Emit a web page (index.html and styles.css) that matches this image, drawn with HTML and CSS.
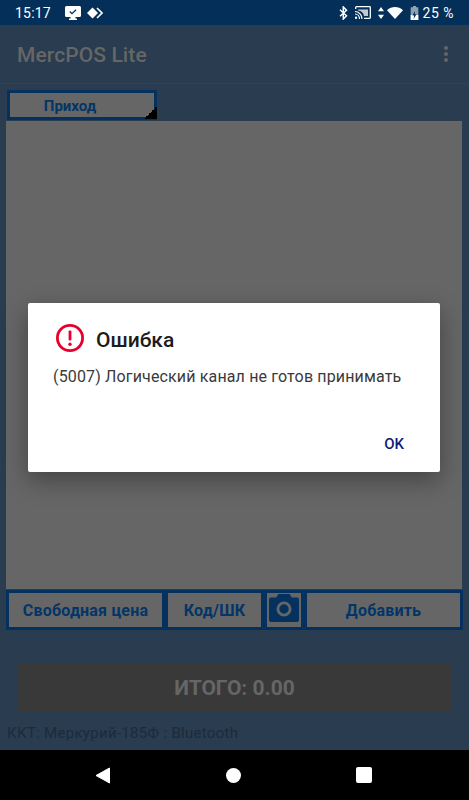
FILE: index.html
```html
<!DOCTYPE html>
<html lang="ru">
<head>
<meta charset="utf-8">
<title>MercPOS Lite</title>
<link rel="stylesheet" href="styles.css">
</head>
<body>
<div class="screen">
  <header class="statusbar">
    <div class="status-left">
      <span class="clock">15:17</span>
      <svg class="ic-monitor" width="16" height="14" viewBox="0 0 16 14"><path fill="#fff" d="M1.5 0h13A1.5 1.5 0 0 1 16 1.500v8A1.500 1.500 0 0 1 14.500 11h-4v1.500h1.500V14H4v-1.500h1.500V11h-4A1.500 1.500 0 0 1 0 9.500v-8A1.500 1.500 0 0 1 1.500 0z"/><path fill="none" stroke="#032f58" stroke-width="1.300" d="M4.800 5.500l2.200 2.200 4-4"/></svg>
      <svg class="ic-nfc" width="16" height="12" viewBox="0 0 16 12"><path fill="#fff" d="M5.500 0.500l5.500 5.500-5.500 5.500L0 6z"/><path fill="none" stroke="#fff" stroke-width="1.600" d="M10 1l5 5-5 5"/></svg>
    </div>
    <div class="status-right">
      <svg width="9" height="14" viewBox="0 0 9 14"><path fill="none" stroke="#fff" stroke-width="1.500" d="M1 3.800l6.500 6L4.300 13V1l3.200 3.200L1 10.200"/></svg>
      <svg class="ic-cast" width="16" height="13" viewBox="0 0 16 13"><path fill="none" stroke="#fff" stroke-width="1.300" d="M0.700 3V1.500a.8.8 0 0 1 .8-.8h13a.8.8 0 0 1 .8.8v10a.8.8 0 0 1-.8.8H9"/><path fill="#fff" d="M3 3.500h10v6.500H9C8.500 7 6.500 5 3 4.600z" opacity=".75"/><path fill="none" stroke="#fff" stroke-width="1.200" d="M0 5.500c3.500 0 7 3 7 7.500M0 8c2.500 0 4.500 2 4.500 5"/><circle cx="1" cy="11.800" r="1.200" fill="#fff"/></svg>
      <svg class="ic-updown" width="6" height="12" viewBox="0 0 6 12"><path fill="#fff" d="M3 0l3 4.200H0zM3 12L0 7.800h6z"/></svg>
      <svg class="ic-wifi" width="16" height="12" viewBox="0 0 16 12"><path fill="#fff" d="M0 3.200C4.500-1 11.500-1 16 3.200L8 12z"/></svg>
      <svg class="ic-batt" width="9" height="14" viewBox="0 0 9 14"><path fill="#fff" opacity=".55" d="M3 0h3v1.300h2.300V14H.7V1.300H3z"/><path fill="#fff" d="M.7 9h7.600v5H.7z"/><path fill="#032f58" d="M5 5L2.500 9.500h1.600L3.600 13 6.500 8.300H4.800z"/></svg>
      <span class="battery-text">25 %</span>
    </div>
  </header>

  <div class="toolbar">
    <span class="app-title">MercPOS Lite</span>
    <span class="overflow"><i></i><i></i><i></i></span>
  </div>

  <main class="content">
    <div class="spinner">Приход</div>
    <div class="list"></div>
    <div class="actions">
      <button class="btn btn-free">Свободная цена</button>
      <button class="btn btn-code">Код/ШК</button>
      <button class="btn btn-cam" aria-label="Камера">
        <svg width="30" height="28" viewBox="0 0 30 28"><path fill="#04315d" fill-rule="evenodd" d="M9.500 0h11l2.300 3.400H28a2 2 0 0 1 2 2V26a2 2 0 0 1-2 2H2a2 2 0 0 1-2-2V5.400a2 2 0 0 1 2-2h5.200zM15 7.500a7.500 7.500 0 1 0 0 15 7.500 7.500 0 0 0 0-15zM15 10.300a4.700 4.700 0 1 1 0 9.400 4.700 4.700 0 0 1 0-9.400z"/></svg>
      </button>
      <button class="btn btn-add">Добавить</button>
    </div>
    <div class="total">ИТОГО: 0.00</div>
    <div class="kkt">ККТ: Меркурий-185Ф : Bluetooth</div>
  </main>

  <nav class="navbar">
    <svg width="16" height="17" viewBox="0 0 16 17"><path fill="#fff" stroke="#fff" stroke-linejoin="round" d="M14.500 1v15L1 8.500z"/></svg>
    <span class="nav-circle"></span>
    <span class="nav-square"></span>
  </nav>

  <div class="dialog" role="alertdialog">
    <div class="dialog-head">
      <svg width="28" height="28" viewBox="0 0 28 28"><circle cx="14" cy="14" r="12.600" fill="none" stroke="#e8002d" stroke-width="2.800"/><rect x="12.600" y="6.500" width="2.800" height="10" rx="1" fill="#e8002d"/><circle cx="14" cy="20.300" r="1.700" fill="#e8002d"/></svg>
      <span class="dialog-title">Ошибка</span>
    </div>
    <p class="dialog-msg">(5007) Логический канал не готов принимать</p>
    <div class="dialog-foot"><span class="dialog-ok">OK</span></div>
  </div>
</div>
</body>
</html>
```
FILE: styles.css
```css
* { box-sizing: border-box; }
html, body { margin: 0; padding: 0; }
body { font-family: Roboto, "Noto Sans", sans-serif; background: #293c50; }
.screen { position: relative; width: 469px; height: 800px; display: flex; flex-direction: column; overflow: hidden; background: #293c50; }

.statusbar { height: 25px; flex: none; background: #032f58; color: #fff; display: flex; justify-content: space-between; align-items: center; padding: 0 15px; font-size: 14px; }
.status-left, .status-right { display: flex; align-items: center; }
.clock { letter-spacing: .2px; width: 50px; }
.ic-nfc { margin-left: 6px; }
.status-right svg { flex: none; }
.ic-cast { margin-left: 7px; }
.ic-updown { margin-left: 7px; }
.ic-wifi { margin-left: 3px; }
.ic-batt { margin-left: 7px; }
.battery-text { margin-left: 4px; letter-spacing: .5px; }

.toolbar { height: 59px; flex: none; display: flex; align-items: center; justify-content: space-between; padding: 2px 21px 0 17px; border-bottom: 1px solid #2e4155; }
.app-title { font-size: 21px; font-weight: 500; color: #666; letter-spacing: .1px; }
.overflow { display: flex; flex-direction: column; gap: 2px; margin-top: -2px; }
.overflow i { width: 4px; height: 4px; border-radius: 50%; background: #666; }

.content { flex: 1; display: flex; flex-direction: column; padding: 6px 0 0 6px; min-height: 0; }
.spinner { position: relative; width: 150px; height: 30px; flex: none; margin: 0 0 1px 1px; background: #666; border: 3px solid #04315d; color: #033566; font-size: 15px; font-weight: 700; display: flex; align-items: center; justify-content: center; padding: 1px 24px 0 0; }
.spinner::after { content: ""; position: absolute; right: -3px; bottom: -2px; width: 13px; height: 13px; background: linear-gradient(135deg, transparent 50%, #000 50%); }
.list { width: 456px; height: 468px; flex: none; background: #666; }

.actions { width: 457px; height: 40px; flex: none; display: flex; margin-top: 1px; }
.btn { height: 40px; margin: 0; padding: 1px 0 0; background: #666; border: 3px solid #04315d; color: #033566; font-family: inherit; font-size: 16px; font-weight: 700; letter-spacing: .2px; display: flex; align-items: center; justify-content: center; }
.btn-free { width: 159px; }
.btn-code { width: 99px; }
.btn-cam { width: 40px; padding: 0 0 5px; }
.btn-add { width: 159px; }

.total { width: 435px; height: 48px; flex: none; margin: 33px 0 0 11px; padding-top: 1px; background: #393939; color: #666; font-size: 21px; font-weight: 700; display: flex; align-items: center; justify-content: center; }
.kkt { margin: 13px 0 0 1px; font-size: 15px; line-height: 18px; color: #1b2b3c; letter-spacing: .3px; }

.navbar { height: 50px; flex: none; background: #000; display: flex; align-items: center; padding: 0 97px 0 95px; justify-content: space-between; }
.nav-circle { width: 15px; height: 15px; border-radius: 50%; background: #fff; }
.nav-square { width: 16px; height: 16px; border-radius: 2px; background: #fff; }

.dialog { position: absolute; left: 28px; top: 303px; width: 412px; height: 169px; background: #fff; border-radius: 2px; box-shadow: 0 8px 24px rgba(0,0,0,.35); padding: 21px 25px 0; display: flex; flex-direction: column; }
.dialog-head { display: flex; align-items: center; gap: 12px; padding-left: 3px; }
.dialog-title { font-size: 21px; font-weight: 500; color: #1c1c1c; padding-top: 4px; }
.dialog-msg { margin: 14px 0 0; font-size: 16px; line-height: 22px; color: #3a3a3a; letter-spacing: .15px; }
.dialog-foot { margin-top: auto; display: flex; justify-content: flex-end; padding: 0 11px 19px 0; }
.dialog-ok { font-size: 15px; font-weight: 500; color: #0d1b78; line-height: 18px; }
```
